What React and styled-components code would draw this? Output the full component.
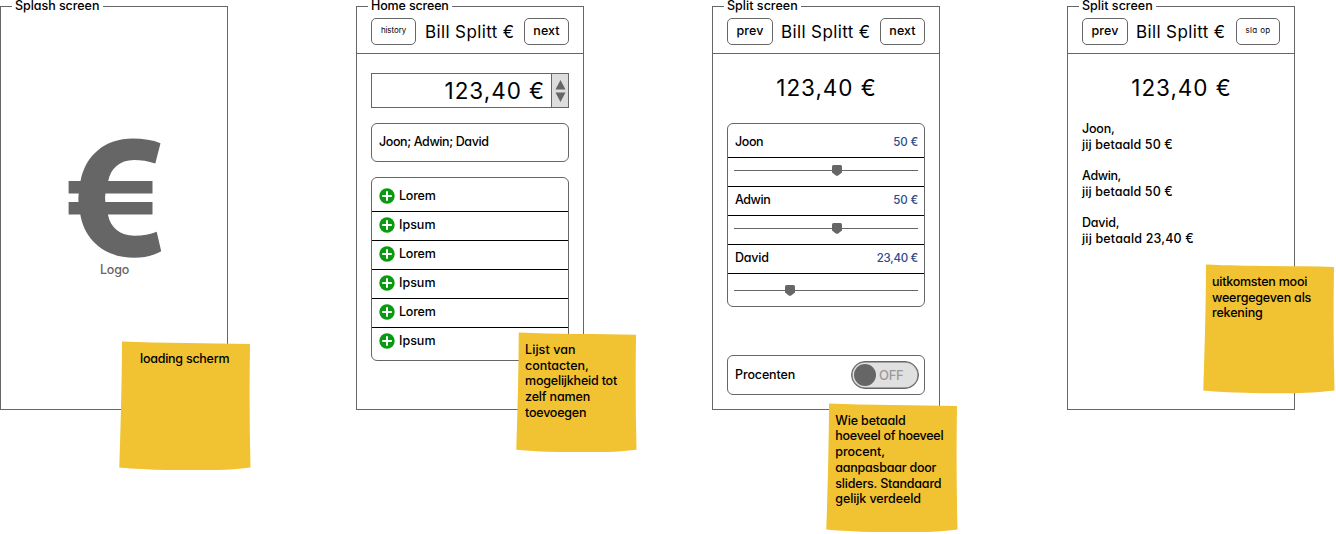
import React from "react";
import styled, { createGlobalStyle } from "styled-components";

const line = "#666";

const GlobalStyle = createGlobalStyle`
  * { box-sizing: border-box; }
  body {
    margin: 0;
    background: #fff;
    color: #000;
    font-family: Inter, "Liberation Sans", sans-serif;
    font-size: 12.5px;
    font-weight: 500;
    line-height: 15.7px;
    font-feature-settings: "cv11";
    overflow: hidden;
  }
`;

const Board = styled.main`
  display: flex;
  gap: 128px;
  width: 1336px;
  height: 534px;
  padding-top: 6px;
  overflow: hidden;
`;

const Screen = styled.section`
  position: relative;
  display: flex;
  flex-direction: column;
  flex: none;
  width: 228px;
  height: 404px;
  border: 1px solid ${line};
  margin-left: ${(p) => p.$shift || 0}px;
`;

const ScreenTitle = styled.h2`
  position: absolute;
  top: -7px;
  left: 11px;
  margin: 0;
  padding: 0 3px;
  width: ${(p) => p.$width}px;
  background: #fff;
  font-size: 12.5px;
  font-weight: 500;
  line-height: 12px;
  white-space: nowrap;
`;

const Text = styled.span`
  white-space: pre;
  letter-spacing: ${(p) => p.$track || 0}px;
`;

const Header = styled.header`
  display: flex;
  height: 47px;
  flex: none;
  padding: 11px 14px 0;
  border-bottom: 1px solid ${line};
`;

const Button = styled.button`
  display: flex;
  align-items: center;
  justify-content: center;
  flex: none;
  width: ${(p) => p.$width}px;
  height: 27px;
  padding: 0 0 1px;
  border: 1px solid ${line};
  border-radius: 5px;
  background: #fff;
  color: #000;
  font: inherit;
  font-size: ${(p) => (p.$small ? 8 : 12.5)}px;
  font-weight: ${(p) => (p.$small ? 400 : 500)};
`;

const AppName = styled.h1`
  flex: 1;
  margin: 0;
  padding-left: ${(p) => p.$inset}px;
  font-size: 17px;
  font-weight: 400;
  line-height: 28px;
`;

const Splash = styled.div`
  display: flex;
  flex-direction: column;
  align-items: center;
  padding: 131px 0 0 1px;
  color: ${line};
`;

const LogoMark = styled.svg`
  display: block;
  width: 94px;
  height: 121px;
  margin-bottom: 3px;
`;

const Body = styled.div`
  display: flex;
  flex-direction: column;
  flex: 1;
  padding: ${(p) => p.$top}px 14px 14px;
`;

const AmountField = styled.div`
  display: flex;
  height: 35px;
  border: 1px solid ${line};
`;

const Amount = styled.div`
  flex: 1;
  font-size: 22.5px;
  font-weight: 400;
  line-height: 33px;
  padding-right: 6px;
  text-align: right;
`;

const Spinner = styled.div`
  display: flex;
  align-items: center;
  justify-content: center;
  width: 17px;
  border-left: 1px solid ${line};
  background: #ddd;
`;

const Total = styled.div`
  height: 35px;
  padding-left: 1px;
  font-size: 22.5px;
  font-weight: 400;
  line-height: 35px;
  text-align: center;
`;

const Card = styled.div`
  display: flex;
  align-items: center;
  justify-content: space-between;
  height: ${(p) => p.$height}px;
  margin-top: ${(p) => p.$gap}px;
  padding: ${(p) => p.$pad || "0 5px 2px 7px"};
  border: 1px solid ${line};
  border-radius: 6px;
`;

const List = styled.ul`
  display: flex;
  flex-direction: column;
  height: 184px;
  margin: ${(p) => p.$gap}px 0 0;
  padding: 5px 0 0;
  list-style: none;
  border: 1px solid ${line};
  border-radius: 6px;
`;

const Row = styled.li`
  display: flex;
  align-items: center;
  height: 29px;
  flex: none;
  padding: ${(p) => p.$pad || "0 6px 2px 7px"};
  border-bottom: 1px solid #000;
  &:last-child { border-bottom-color: transparent; }
`;

const ContactName = styled.span`
  padding-left: 4px;
`;

const PlusIcon = styled.svg`
  display: block;
  width: 16px;
  height: 16px;
`;

const PersonRow = styled(Row)`
  justify-content: space-between;
`;

const Share = styled.span`
  padding-top: 1px;
  color: #2b4b8c;
  font-size: 11.5px;
`;

const Track = styled.div`
  position: relative;
  width: 184px;
  height: 1px;
  background: ${line};
`;

const Thumb = styled.svg`
  position: absolute;
  top: -5px;
  left: ${(p) => p.$at}px;
  width: 10px;
  height: 11px;
`;

const Toggle = styled.div`
  display: flex;
  align-items: center;
  gap: 3px;
  width: 68px;
  height: 28px;
  padding-left: 2px;
  border: 1px solid ${line};
  box-shadow: inset 0 0 0 0.5px ${line};
  border-radius: 14px;
  background: #e0e0e0;
  color: #999;
  font-size: 13px;
`;

const Knob = styled.i`
  width: 22px;
  height: 22px;
  border-radius: 50%;
  background: ${line};
`;

const ToggleLabel = styled.span`
  padding-top: 1px;
`;

const Receipt = styled.div`
  display: flex;
  flex-direction: column;
  gap: 15.7px;
  margin-top: 16px;
`;

const Lines = styled.div`
  display: flex;
  flex-direction: column;
  align-items: flex-start;
`;

const Sticky = styled.aside`
  position: absolute;
  left: ${(p) => p.$x}px;
  top: ${(p) => p.$y}px;
  width: ${(p) => p.$w}px;
  height: ${(p) => p.$h}px;
  padding: ${(p) => p.$top}px 0 0 ${(p) => p.$inset}px;
`;

const Paper = styled.svg`
  position: absolute;
  inset: 0;
  width: 100%;
  height: 100%;
  z-index: -1;
`;

const StickyLayer = styled.div`
  position: absolute;
  inset: 0;
  z-index: 1;
  pointer-events: none;
`;

function Note({ x, y, w = 131.5, h = 129.5, top = 10.2, inset = 9, lines }) {
  return (
    <StickyLayer>
      <Sticky $x={x} $y={y} $w={w} $h={h} $top={top} $inset={inset}>
        <Paper viewBox="0 0 131 129" preserveAspectRatio="none">
          <path
            fill="#f1c232"
            d="M3 .5C40 2.4 90 1.8 130.5 3C129.8 45 130 85 131 126C110 128.5 95 128.8 75 128.8C48 128.8 22 128 .3 126C1.5 88 2.8 48 3 .5Z"
          />
        </Paper>
        <Lines>
          {lines.map(([text, track]) => (
            <Text key={text} $track={track}>{text}</Text>
          ))}
        </Lines>
      </Sticky>
    </StickyLayer>
  );
}

function Title({ width, track, children }) {
  return (
    <ScreenTitle $width={width}>
      <Text $track={track}>{children}</Text>
    </ScreenTitle>
  );
}

function TopBar({ left, right, inset = 8 }) {
  return (
    <Header>
      <Button $width={left.width} $small={left.small}>
        <Text $track={left.track}>{left.label}</Text>
      </Button>
      <AppName $inset={inset}><Text $track={0.37}>Bill Splitt €</Text></AppName>
      <Button $width={right.width} $small={right.small}>
        <Text $track={right.track}>{right.label}</Text>
      </Button>
    </Header>
  );
}

const prev = { label: "prev", width: 46, track: 0.05 };
const next = { label: "next", width: 45, track: 0.1 };
const history = { label: "history", width: 45, small: true, track: -0.1 };
const save = { label: "sla op", width: 44, small: true, track: 0.35 };

const contacts = ["Lorem", "Ipsum", "Lorem", "Ipsum", "Lorem", "Ipsum"];

const people = [
  { name: "Joon", track: -0.43, share: "50 €", shareTrack: -0.15, at: 98, pad: "0 6px 3px" },
  { name: "Adwin", track: -0.46, share: "50 €", shareTrack: -0.15, at: 98, pad: "0 6px 3px" },
  { name: "David", track: -0.23, share: "23,40 €", shareTrack: -0.3, at: 51, pad: "5px 6px 0" },
];

const receipt = [
  [["Joon,", -0.2], ["jij betaald 50 €", 0.1]],
  [["Adwin,", -0.38], ["jij betaald 50 €", 0.1]],
  [["David,", -0.23], ["jij betaald 23,40 €", 0.17]],
];

export default function App() {
  return (
    <>
      <GlobalStyle />
      <Board>
        <Screen>
          <Title width={91} track={-0.05}>Splash screen</Title>
          <Splash>
            <LogoMark viewBox="0 0 94 121">
              <path
                fill={line}
                d="M92.5 5.2L87.3 25.6C80 22.9 73 21.9 66 21.9C51.5 21.9 42.5 30.5 40.2 43.1H84.5V55.6H37.5Q36.8 59.6 37.4 63.9H84.5V76.6H39.9C42.5 90 52 97.7 66.5 97.7C75 97.7 82 96.5 88.7 93.8L93.2 113.2C85 117.8 75.5 119.8 66.5 119.8C36.5 119.8 16.5 102 12.3 76.6H.6V63.9H10.5Q10.2 59.6 10.8 55.6H.6V43.1H12.5C17.5 17 37.5 .6 64.5 .6C75.5 .6 84.5 2.2 92.5 5.2Z"
              />
            </LogoMark>
            <Text $track={-0.25}>Logo</Text>
          </Splash>
          <Note x={118} y={333.5} inset={21} lines={[["loading scherm", -0.25]]} />
        </Screen>

        <Screen>
          <Title width={84} track={-0.15}>Home screen</Title>
          <TopBar left={history} right={next} inset={9} />
          <Body $top={19}>
            <AmountField>
              <Amount><Text $track={0.95}>123,40 €</Text></Amount>
              <Spinner>
                <svg width="11" height="22" viewBox="0 0 11 22" fill={line}>
                  <path d="M5.5 0L10.5 9.5H.5ZM.5 12.5H10.5L5.5 22Z" />
                </svg>
              </Spinner>
            </AmountField>
            <Card $height={39} $gap={15}><Text $track={-0.4}>Joon; Adwin; David</Text></Card>
            <List $gap={15}>
              {contacts.map((name, i) => (
                <Row key={i}>
                  <PlusIcon viewBox="0 0 16 16">
                    <circle cx="8" cy="8" r="7.7" fill="#0a9a12" />
                    <path d="M8 3.2V12.8M3.2 8H12.8" stroke="#fff" strokeWidth="2" />
                  </PlusIcon>
                  <ContactName><Text $track={name === "Lorem" ? -0.2 : 0}>{name}</Text></ContactName>
                </Row>
              ))}
            </List>
          </Body>
          <Note
            x={159} y={324.5} w={120.5} h={120.5} top={10.5}
            lines={[["Lijst van", 0.08], ["contacten,", -0.05], ["mogelijkheid tot", -0.2], ["zelf namen", -0.15], ["toevoegen", -0.22]]}
          />
        </Screen>

        <Screen>
          <Title width={77} track={0.03}>Split screen</Title>
          <TopBar left={prev} right={next} />
          <Body $top={16}>
            <Total><Text $track={0.95}>123,40 €</Text></Total>
            <List $gap={18}>
              {people.map((p) => (
                <React.Fragment key={p.name}>
                  <PersonRow>
                    <Text $track={p.track}>{p.name}</Text>
                    <Share><Text $track={p.shareTrack}>{p.share}</Text></Share>
                  </PersonRow>
                  <Row $pad={p.pad}>
                    <Track>
                      <Thumb $at={p.at} viewBox="0 0 10 11">
                        <path fill={line} d="M1.5 0H8.5Q10 0 10 1.5V7.5L6.5 10.3Q5 11.3 3.5 10.3L0 7.5V1.5Q0 0 1.5 0Z" />
                      </Thumb>
                    </Track>
                  </Row>
                </React.Fragment>
              ))}
            </List>
            <Card $height={40} $gap={48} $pad="0 5px 0 7px">
              <Text $track={-0.12}>Procenten</Text>
              <Toggle>
                <Knob />
                <ToggleLabel><Text $track={-0.3}>OFF</Text></ToggleLabel>
              </Toggle>
            </Card>
          </Body>
          <Note
            x={113.3} y={395.5}
            lines={[["Wie betaald", -0.15], ["hoeveel of hoeveel", -0.27], ["procent,", -0.04], ["aanpasbaar door", -0.22], ["sliders. Standaard", -0.2], ["gelijk verdeeld", -0.1]]}
          />
        </Screen>

        <Screen $shift={-1}>
          <Title width={77} track={0.03}>Split screen</Title>
          <TopBar left={prev} right={save} />
          <Body $top={16}>
            <Total><Text $track={0.95}>123,40 €</Text></Total>
            <Receipt>
              {receipt.map((entry) => (
                <Lines key={entry[0][0]}>
                  {entry.map(([text, track]) => (
                    <Text key={text} $track={track}>{text}</Text>
                  ))}
                </Lines>
              ))}
            </Receipt>
          </Body>
          <Note
            x={135} y={257.3} top={9.6}
            lines={[["uitkomsten mooi", -0.24], ["weergegeven als", -0.2], ["rekening", -0.17]]}
          />
        </Screen>
      </Board>
    </>
  );
}
